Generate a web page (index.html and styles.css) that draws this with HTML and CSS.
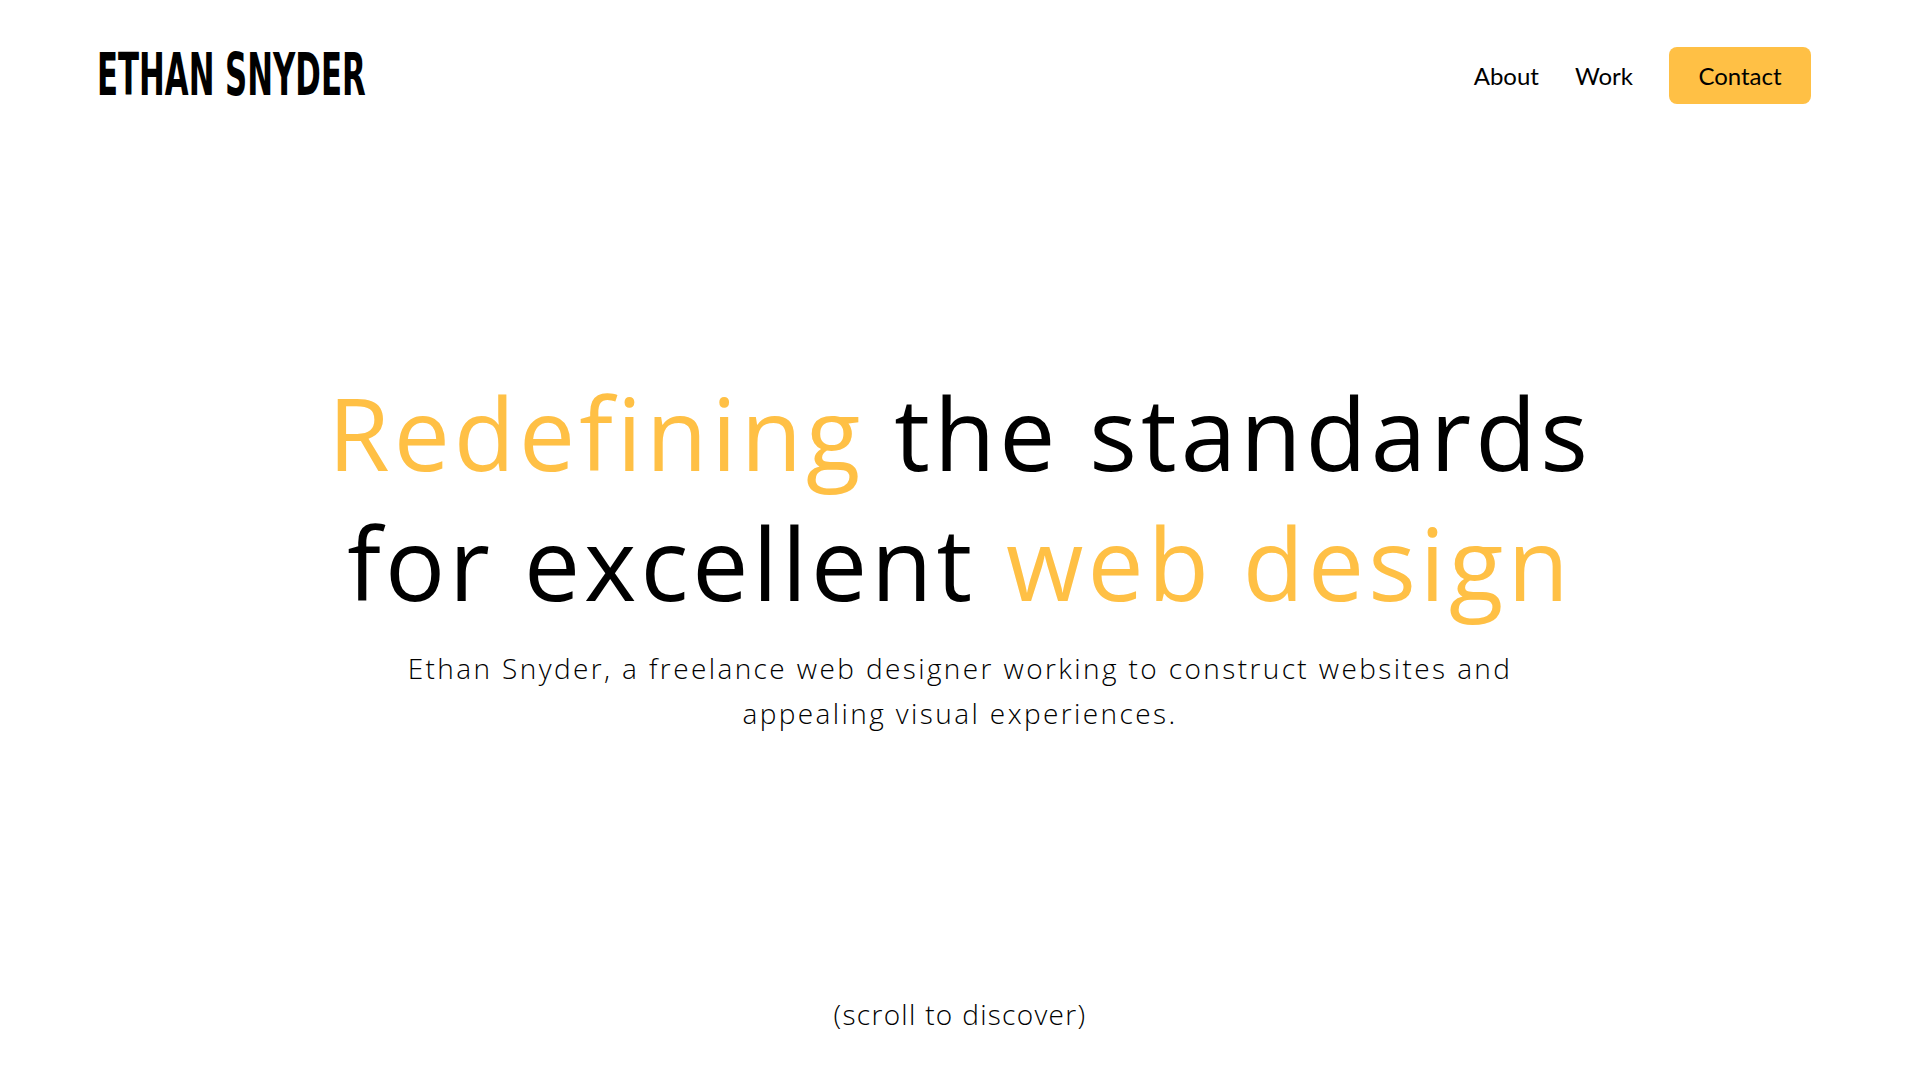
FILE: index.html
```html
<!DOCTYPE html>
<html lang="en">
<head>
<meta charset="utf-8">
<title>Ethan Snyder</title>
<link rel="stylesheet" href="styles.css">
</head>
<body>
<div class="page">
  <header class="topbar">
    <a class="logo" href="#"><span class="logo-text">ETHAN SNYDER</span></a>
    <nav class="nav">
      <a class="nav-link" href="#">About</a>
      <a class="nav-link" href="#">Work</a>
      <a class="nav-button" href="#">Contact</a>
    </nav>
  </header>
  <main class="hero">
    <h1 class="headline"><span class="accent">Redefining</span> the standards<br>for excellent <span class="accent">web design</span></h1>
    <p class="lead">Ethan Snyder, a freelance web designer working to construct websites and<br>appealing visual experiences.</p>
  </main>
  <div class="scroll-hint">(scroll to discover)</div>
</div>
</body>
</html>
```
FILE: styles.css
```css
* { box-sizing: border-box; }
html, body { margin: 0; padding: 0; background: #fff; }
body { font-family: "Open Sans", "DejaVu Sans", sans-serif; color: #000; }
a { color: inherit; text-decoration: none; }

.page {
  height: 1080px;
  display: flex;
  flex-direction: column;
}

.topbar {
  display: flex;
  justify-content: space-between;
  align-items: center;
  padding: 47px 109px 0 97px;
}

.logo {
  display: block;
  width: 268px;
  height: 57px;
  overflow: visible;
}
.logo-text {
  display: inline-block;
  font-family: "DejaVu Sans Condensed", "DejaVu Sans", sans-serif;
  font-weight: 700;
  font-size: 58px;
  line-height: 57px;
  white-space: nowrap;
  transform: scaleX(0.59);
  transform-origin: left center;
}

.nav {
  display: flex;
  align-items: center;
}
.nav-link {
  font-family: "Lato", sans-serif;
  font-size: 24px;
  font-weight: 400;
  margin-right: 36px;
}
.nav-button {
  display: flex;
  align-items: center;
  justify-content: center;
  width: 142px;
  height: 57px;
  border-radius: 8px;
  background: #ffc045;
  font-family: "Lato", sans-serif;
  font-size: 24px;
}

.hero {
  text-align: center;
  padding-top: 263px;
}
.headline {
  margin: 0;
  font-size: 100px;
  font-weight: 400;
  line-height: 130px;
  letter-spacing: 4px;
}
.accent { color: #ffc045; }

.lead {
  margin: 19px 0 0;
  font-size: 28px;
  font-weight: 300;
  line-height: 45px;
  letter-spacing: 2.4px;
  color: #000;
}

.scroll-hint {
  margin-top: auto;
  padding-bottom: 47px;
  text-align: center;
  font-size: 28px;
  font-weight: 300;
  line-height: 37px;
  letter-spacing: 1.3px;
}
```
